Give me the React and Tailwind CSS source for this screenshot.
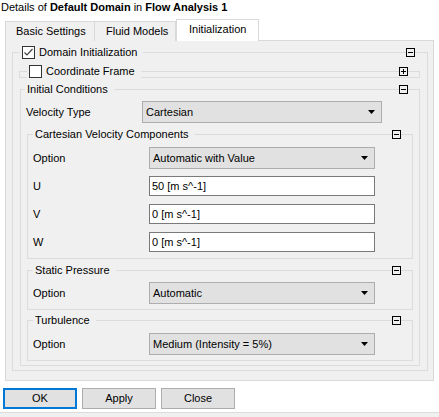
import React from "react";

const FONT = { fontFamily: '"Liberation Sans", Arial, sans-serif' };

function Toggle({ open }) {
  return (
    <svg width="9" height="9" viewBox="0 0 9 9" className="block">
      <rect x="0.5" y="0.5" width="8" height="8" fill="#f0f0f0" stroke="#000" />
      <line x1="2" y1="4.5" x2="7" y2="4.5" stroke="#000" />
      {!open && <line x1="4.5" y1="2" x2="4.5" y2="7" stroke="#000" />}
    </svg>
  );
}

function Check({ checked }) {
  return (
    <span className="flex h-[13px] w-[13px] items-center justify-center border border-[#333] bg-white">
      {checked && (
        <svg width="11" height="11" viewBox="0 0 11 11">
          <polyline points="1.5,5.5 4,8 9.5,2" fill="none" stroke="#444" strokeWidth="1.2" />
        </svg>
      )}
    </span>
  );
}

function Arrow() {
  return (
    <svg width="7" height="4" viewBox="0 0 7 4" className="block">
      <polygon points="0,0 7,0 3.5,4" fill="#000" />
    </svg>
  );
}

function Group({ title, check, checked, open = true, pl = "pl-[5px]", pr = "pr-[11px]", className = "", children }) {
  return (
    <div className={`border border-[#dcdcdc] ${className}`}>
      <div className={`-mt-[7px] flex h-[13px] items-center justify-between ${pl} ${pr} ${open ? "" : "-mb-[1px]"}`}>
        <div className="flex h-[13px] items-center bg-[#f0f0f0] px-[2px] pr-[6px]">
          {check && <Check checked={checked} />}
          <span className={`leading-[13px] ${check ? "ml-[4px]" : ""}`}>{title}</span>
        </div>
        <Toggle open={open} />
      </div>
      {children}
    </div>
  );
}

function Combo({ value, w = "w-[226px]" }) {
  return (
    <div className={`flex h-[22px] ${w} items-center justify-between border border-[#adadad] bg-[#e1e1e1] pl-[3px] pr-[6px]`}>
      <span>{value}</span>
      <Arrow />
    </div>
  );
}

function Field({ value }) {
  return (
    <div className="flex h-[20px] w-[226px] items-center border border-[#7a7a7a] bg-white pl-[2px]">
      {value}
    </div>
  );
}

function Row({ label, children, className = "" }) {
  return (
    <div className={`flex items-center pl-[5px] ${className}`}>
      <span className="w-[116px]">{label}</span>
      {children}
    </div>
  );
}

const TABS = ["Basic Settings", "Fluid Models", "Initialization"];

export default function App() {
  return (
    <div className="h-[417px] w-[439px] overflow-hidden bg-white text-[11px] text-black" style={FONT}>
      <div className="h-[19px] pl-[1px] pt-[1px] leading-[13px]">
        Details of <b>Default Domain</b> in <b>Flow Analysis 1</b>
      </div>

      <div className="relative z-10 flex h-[22px] items-end pl-[5px]">
        <div className="flex h-[20px] w-[90px] items-center border border-b-0 border-[#d9d9d9] bg-[#f0f0f0] pl-[10px]">
          Basic Settings
        </div>
        <div className="flex h-[20px] w-[81px] items-center border border-b-0 border-l-0 border-[#d9d9d9] bg-[#f0f0f0] pl-[11px]">
          Fluid Models
        </div>
        <div className="flex h-[22px] w-[83px] items-center border border-b-0 border-[#d9d9d9] bg-white pb-[2px] pl-[12px]">
          Initialization
        </div>
      </div>

      <div className="-mt-[1px] ml-[5px] w-[429px] border border-[#d9d9d9] bg-[#f0f0f0] pb-[9px] pt-[11px]">
        <Group title="Domain Initialization" check checked pl="pl-[7px]" pr="pr-[12px]" className="ml-[6px] mr-[5px] pb-[4px]">
          <Group title="Coordinate Frame" check open={false} pl="pl-[7px]" className="ml-[6px] mr-[7px] mt-[12px]" />

          <Group title="Initial Conditions" pl="pl-[4px]" className="ml-[7px] mr-[7px] mt-[11px] pb-[4px]">
            <Row label="Velocity Type" className="mt-[5px]">
              <Combo value="Cartesian" w="w-[240px]" />
            </Row>

            <Group title="Cartesian Velocity Components" className="ml-[6px] mr-[6px] mt-[11px] pb-[6px]">
              <Row label="Option" className="mt-[6px]">
                <Combo value="Automatic with Value" />
              </Row>
              <Row label="U" className="mt-[7px]">
                <Field value="50 [m s^-1]" />
              </Row>
              <Row label="V" className="mt-[8px]">
                <Field value="0 [m s^-1]" />
              </Row>
              <Row label="W" className="mt-[8px]">
                <Field value="0 [m s^-1]" />
              </Row>
            </Group>

            <Group title="Static Pressure" className="ml-[6px] mr-[6px] mt-[11px] pb-[5px]">
              <Row label="Option" className="mt-[5px]">
                <Combo value="Automatic" />
              </Row>
            </Group>

            <Group title="Turbulence" className="ml-[6px] mr-[6px] mt-[10px] pb-[5px]">
              <Row label="Option" className="mt-[6px]">
                <Combo value="Medium (Intensity = 5%)" />
              </Row>
            </Group>
          </Group>
        </Group>
      </div>

      <div className="flex h-[31px] gap-[5px] pl-[3px] pt-[7px]">
        <button className="flex h-[21px] w-[74px] items-center justify-center border-2 border-[#0078d7] bg-[#e1e1e1]">
          OK
        </button>
        <button className="flex h-[21px] w-[74px] items-center justify-center border border-[#adadad] bg-[#e1e1e1]">
          Apply
        </button>
        <button className="flex h-[21px] w-[74px] items-center justify-center border border-[#adadad] bg-[#e1e1e1]">
          Close
        </button>
      </div>
      <div className="h-[10px] border-t border-[#dcdcdc] bg-[#f0f0f0]" />
    </div>
  );
}
